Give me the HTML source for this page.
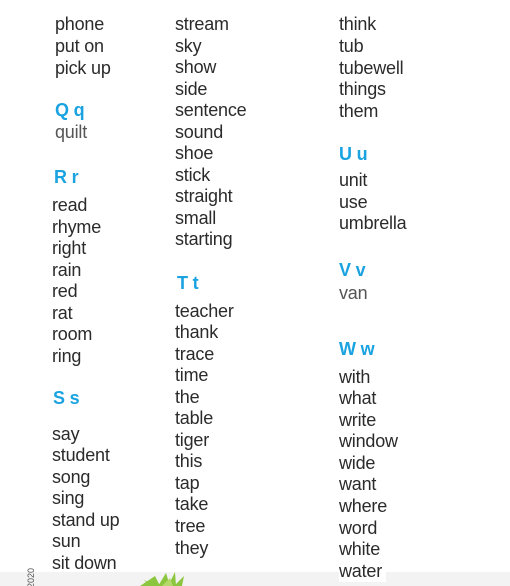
<!DOCTYPE html>
<html><head><meta charset="utf-8"><style>
html,body{margin:0;padding:0;width:510px;height:586px;background:#fff;overflow:hidden;position:relative}
.w{position:absolute;font-family:"Liberation Sans",sans-serif;font-size:18px;line-height:22px;color:#2b2b2b;white-space:nowrap;letter-spacing:-0.2px}
.h{color:#1aa3e0;font-weight:bold}
.l{color:#555}
#band{position:absolute;left:0;top:572px;width:510px;height:14px;background:#f3f3f3}
#yr{position:absolute;left:26px;top:572px;font-family:"Liberation Sans",sans-serif;font-size:9px;color:#555;transform:rotate(-90deg);transform-origin:left top;}
</style></head><body>
<div id="band"></div>
<svg style="position:absolute;left:120px;top:570px" width="80" height="16">
<path d="M20 16 L35 6 L40 16 Z M38 16 L46 3 L50 16 Z M48 16 L55 2 L56 16 Z M54 16 L64 6 L62 16 Z M30 16 L24 10 L36 16 Z" fill="#8cc63f"/>
<path d="M42 16 L50 8 L53 16 Z" fill="#b5d96a"/>
</svg>
<div id="yr" style="top:588px">2020</div>
<div class="w" style="left:55px;top:13px">phone</div>
<div class="w" style="left:55px;top:35px">put on</div>
<div class="w" style="left:55px;top:57px">pick up</div>
<div class="w h" style="left:55px;top:99px">Q q</div>
<div class="w l" style="left:55px;top:121px">quilt</div>
<div class="w h" style="left:54px;top:166px">R r</div>
<div class="w" style="left:52px;top:194px">read</div>
<div class="w" style="left:52px;top:216px">rhyme</div>
<div class="w" style="left:52px;top:237px">right</div>
<div class="w" style="left:52px;top:259px">rain</div>
<div class="w" style="left:52px;top:280px">red</div>
<div class="w" style="left:52px;top:302px">rat</div>
<div class="w" style="left:52px;top:323px">room</div>
<div class="w" style="left:52px;top:345px">ring</div>
<div class="w h" style="left:53px;top:387px">S s</div>
<div class="w" style="left:52px;top:423px">say</div>
<div class="w" style="left:52px;top:444px">student</div>
<div class="w" style="left:52px;top:466px">song</div>
<div class="w" style="left:52px;top:487px">sing</div>
<div class="w" style="left:52px;top:509px">stand up</div>
<div class="w" style="left:52px;top:530px">sun</div>
<div class="w" style="left:52px;top:552px">sit down</div>

<div class="w" style="left:175px;top:13px">stream</div>
<div class="w" style="left:175px;top:35px">sky</div>
<div class="w" style="left:175px;top:56px">show</div>
<div class="w" style="left:175px;top:78px">side</div>
<div class="w" style="left:175px;top:99px">sentence</div>
<div class="w" style="left:175px;top:121px">sound</div>
<div class="w" style="left:175px;top:142px">shoe</div>
<div class="w" style="left:175px;top:164px">stick</div>
<div class="w" style="left:175px;top:185px">straight</div>
<div class="w" style="left:175px;top:207px">small</div>
<div class="w" style="left:175px;top:228px">starting</div>
<div class="w h" style="left:177px;top:272px">T t</div>
<div class="w" style="left:175px;top:300px">teacher</div>
<div class="w" style="left:175px;top:321px">thank</div>
<div class="w" style="left:175px;top:343px">trace</div>
<div class="w" style="left:175px;top:364px">time</div>
<div class="w" style="left:175px;top:386px">the</div>
<div class="w" style="left:175px;top:407px">table</div>
<div class="w" style="left:175px;top:429px">tiger</div>
<div class="w" style="left:175px;top:450px">this</div>
<div class="w" style="left:175px;top:472px">tap</div>
<div class="w" style="left:175px;top:493px">take</div>
<div class="w" style="left:175px;top:515px">tree</div>
<div class="w" style="left:175px;top:537px">they</div>

<div class="w" style="left:339px;top:13px">think</div>
<div class="w" style="left:339px;top:35px">tub</div>
<div class="w" style="left:339px;top:57px">tubewell</div>
<div class="w" style="left:339px;top:78px">things</div>
<div class="w" style="left:339px;top:100px">them</div>
<div class="w h" style="left:339px;top:143px">U u</div>
<div class="w" style="left:339px;top:169px">unit</div>
<div class="w" style="left:339px;top:191px">use</div>
<div class="w" style="left:339px;top:212px">umbrella</div>
<div class="w h" style="left:339px;top:259px">V v</div>
<div class="w l" style="left:339px;top:282px">van</div>
<div class="w h" style="left:339px;top:338px">W w</div>
<div class="w" style="left:339px;top:366px">with</div>
<div class="w" style="left:339px;top:387px">what</div>
<div class="w" style="left:339px;top:409px">write</div>
<div class="w" style="left:339px;top:430px">window</div>
<div class="w" style="left:339px;top:452px">wide</div>
<div class="w" style="left:339px;top:473px">want</div>
<div class="w" style="left:339px;top:495px">where</div>
<div class="w" style="left:339px;top:517px">word</div>
<div class="w" style="left:339px;top:538px">white</div>
<div class="w" style="left:339px;top:560px;background:#fff;padding-right:4px">water</div>
</body></html>
